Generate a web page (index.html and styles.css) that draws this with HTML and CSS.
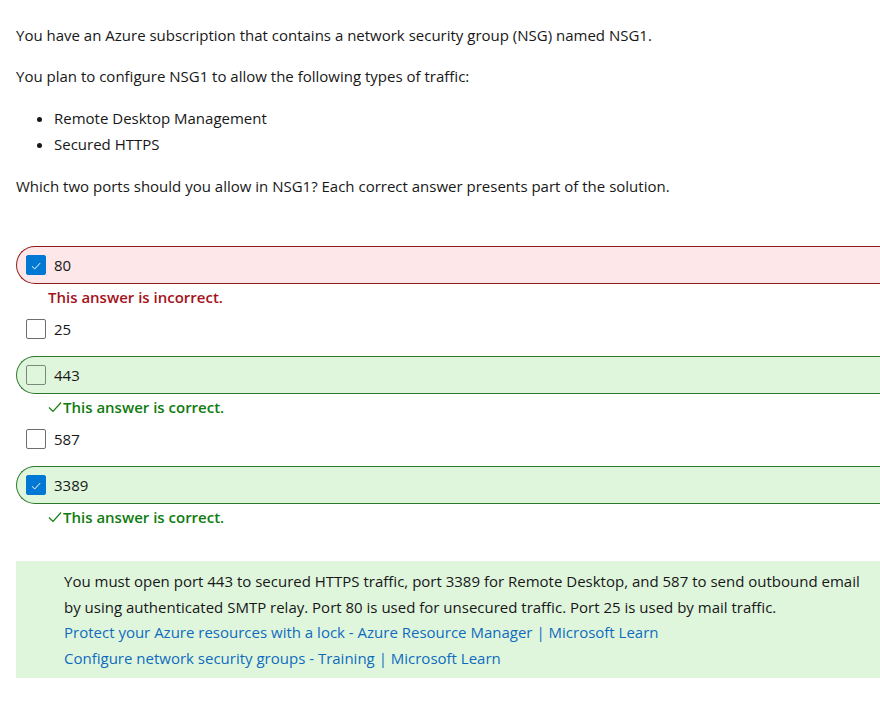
FILE: index.html
```html
<!DOCTYPE html>
<html lang="en">
<head>
<meta charset="utf-8">
<link rel="stylesheet" href="styles.css">
</head>
<body>
<div class="page">
  <p class="para">You have an Azure subscription that contains a network security group (NSG) named NSG1.</p>
  <p class="para">You plan to configure NSG1 to allow the following types of traffic:</p>
  <ul class="list">
    <li>Remote Desktop Management</li>
    <li>Secured HTTPS</li>
  </ul>
  <p class="para">Which two ports should you allow in NSG1? Each correct answer presents part of the solution.</p>

  <div class="answers">
    <div class="option option-wrong">
      <span class="box box-checked"><svg viewBox="0 0 20 20" width="20" height="20"><path d="M5.5 10.3 L8.6 13.3 L14.6 6.8" fill="none" stroke="#fff" stroke-width="1.1"/></svg></span>
      <span class="label">80</span>
    </div>
    <div class="feedback feedback-wrong">This answer is incorrect.</div>

    <div class="option option-plain">
      <span class="box"></span>
      <span class="label">25</span>
    </div>

    <div class="option option-right">
      <span class="box"></span>
      <span class="label">443</span>
    </div>
    <div class="feedback feedback-right"><svg class="tick" viewBox="0 0 14 12" width="14" height="12"><path d="M1 6.5 L5 10.5 L13 1.5" fill="none" stroke="#107c10" stroke-width="1.2"/></svg>This answer is correct.</div>

    <div class="option option-plain">
      <span class="box"></span>
      <span class="label">587</span>
    </div>

    <div class="option option-right">
      <span class="box box-checked"><svg viewBox="0 0 20 20" width="20" height="20"><path d="M5.5 10.3 L8.6 13.3 L14.6 6.8" fill="none" stroke="#fff" stroke-width="1.1"/></svg></span>
      <span class="label">3389</span>
    </div>
    <div class="feedback feedback-right"><svg class="tick" viewBox="0 0 14 12" width="14" height="12"><path d="M1 6.5 L5 10.5 L13 1.5" fill="none" stroke="#107c10" stroke-width="1.2"/></svg>This answer is correct.</div>
  </div>

  <div class="explain">
    <p>You must open port 443 to secured HTTPS traffic, port 3389 for Remote Desktop, and 587 to send outbound email by using authenticated SMTP relay. Port 80 is used for unsecured traffic. Port 25 is used by mail traffic.</p>
    <a href="#">Protect your Azure resources with a lock - Azure Resource Manager | Microsoft Learn</a>
    <a href="#">Configure network security groups - Training | Microsoft Learn</a>
  </div>
</div>
</body>
</html>
```

FILE: styles.css
```css
html, body {
  margin: 0;
  padding: 0;
  overflow: hidden;
  background: #fff;
}
body {
  font-family: "Open Sans", "Noto Sans", sans-serif;
  font-size: 15px;
  color: #171717;
}
.page {
  width: 900px;
  padding: 23px 0 0 16px;
}
.para {
  margin: 0 0 17px 0;
  line-height: 24px;
}
.list {
  margin: 0 0 17px 0;
  padding-left: 38px;
  line-height: 26px;
}
.answers {
  margin-top: 48px;
  display: flex;
  flex-direction: column;
}
.option {
  display: flex;
  align-items: center;
  gap: 8px;
  height: 38px;
  padding-left: 9px;
  box-sizing: border-box;
  border: 1px solid transparent;
  border-radius: 19px 0 0 19px;
}
.option-plain { margin-bottom: 8px; }
.option-wrong {
  background: #fde7e9;
  border-color: #8e1b1b;
  border-right: none;
}
.option-right {
  background: #dff6dd;
  border-color: #2c782c;
  border-right: none;
}
.box {
  width: 20px;
  height: 20px;
  box-sizing: border-box;
  border: 1px solid #6e6e6e;
  border-radius: 2px;
  background: #fff;
  display: flex;
}
.option-right .box { background: transparent; border-color: #7a8a7a; }
.box-checked,
.option-right .box-checked {
  background: #0078d4;
  border-color: #0078d4;
}
.label {
  line-height: 20px;
}
.feedback {
  display: flex;
  align-items: center;
  height: 26px;
  padding-left: 32px;
  font-weight: 600;
  font-size: 15px;
}
.feedback-wrong { color: #a4121a; }
.feedback-right { color: #107c10; }
.tick { margin-right: 1px; }
.explain {
  margin-top: 31px;
  background: #dff6dd;
  padding: 8px 0 6px 48px;
  line-height: 25.7px;
}
.explain p { margin: 0; max-width: 800px; }
.explain a {
  display: block;
  color: #0f6cbd;
  text-decoration: none;
}
```
